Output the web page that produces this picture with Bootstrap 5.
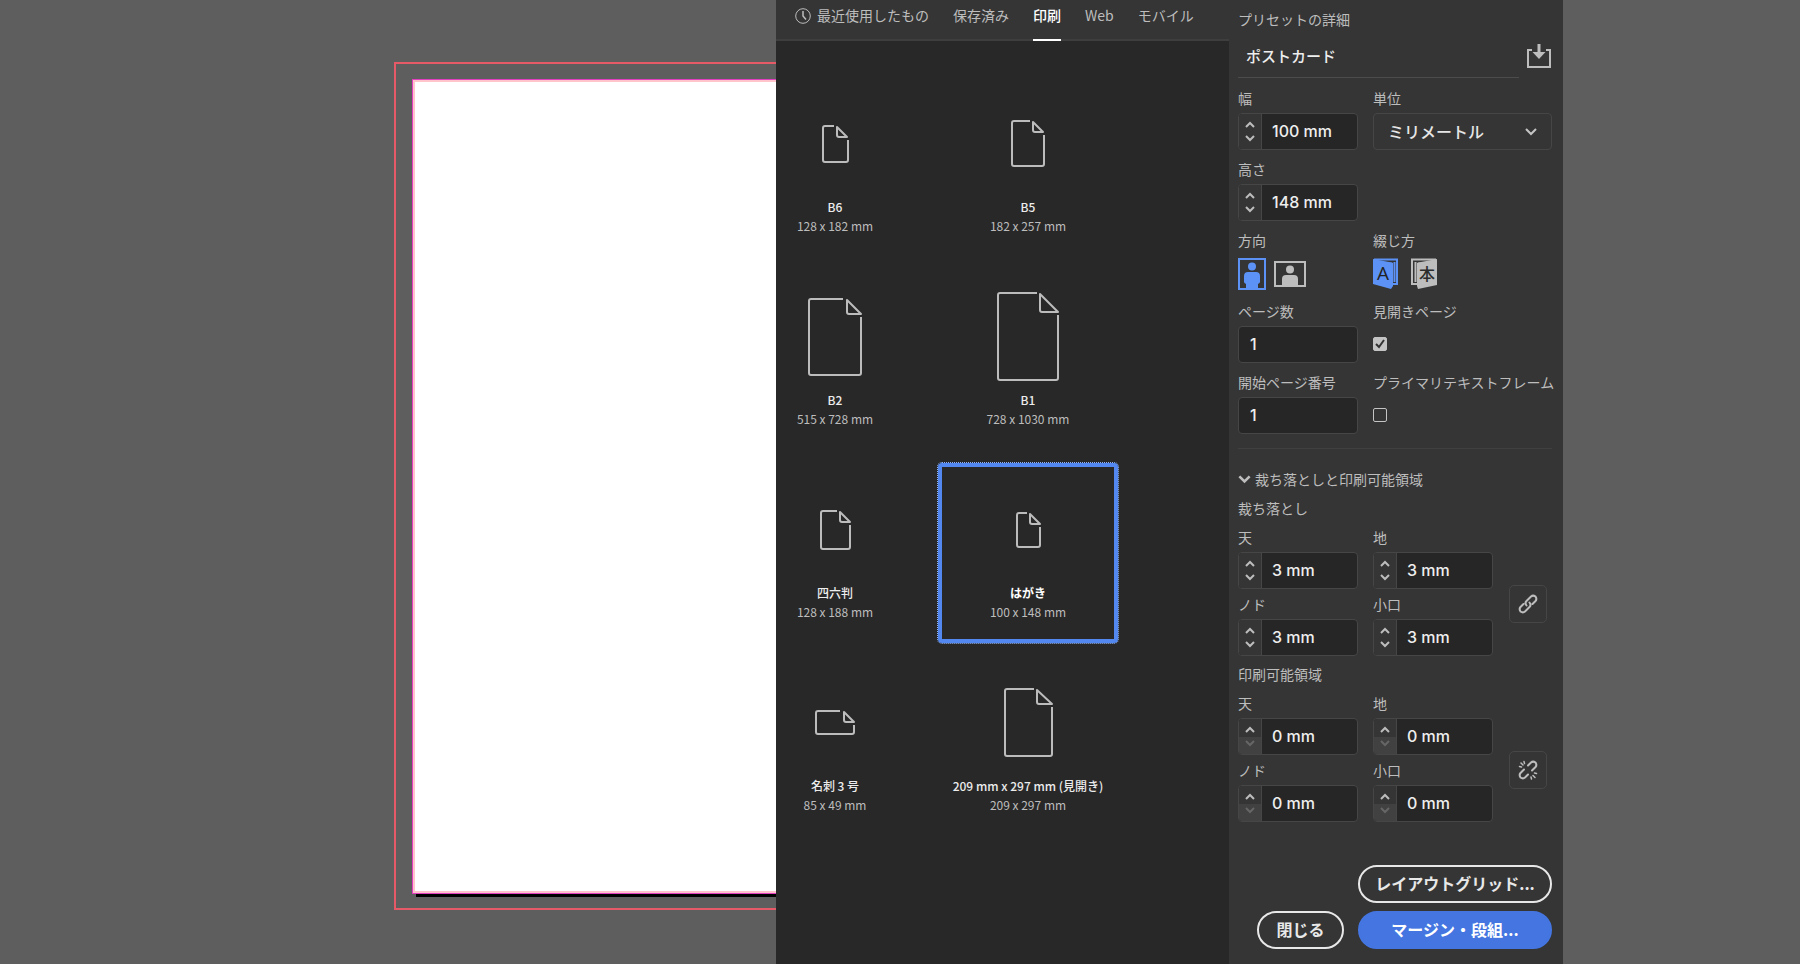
<!DOCTYPE html>
<html lang="ja">
<head>
<meta charset="utf-8">
<meta name="viewport" content="width=device-width, initial-scale=1">
<title>新規ドキュメント</title>
<link rel="stylesheet" href="https://cdn.jsdelivr.net/npm/bootstrap@5.3.0/dist/css/bootstrap.min.css">
<style>
  :root { --panel:#353535; --well:#282828; --line:#464646; --soft:#bdbdbd; --blue:#5288f0; }
  body { background:#5e5e5e; color:var(--soft); font:14px/21px "Noto Sans CJK JP", sans-serif; }
  button { color:inherit; }

  /* pasteboard with the page and its bleed frame */
  .pasteboard { flex:776 1 0; min-width:0; }
  .bleed { border:2px solid #e65a68; border-right:0; padding:15px 0 14px 16px; margin:62px 0 54px 394px; }
  .sheet { background:#fff; border:1px solid #e23cc0; border-right:0; box-shadow:inset 2px 2px #ffc4cc, inset 0 -2px #ffc4cc, 4px 3px #000; }
  .backdrop { flex:237 1 0; min-width:0; }

  /* preset browser */
  .browser { flex:0 0 453px; background:var(--well); overflow:hidden; position:relative; z-index:1; }
  .tabs { background:var(--panel); border-bottom:2px solid #3e3e3e; gap:24px; padding-left:19px; height:41px; }
  .tabs button { background:none; border:0; border-bottom:2px solid transparent; padding:4px 0 12px; margin-bottom:-2px; height:41px; gap:6px; white-space:nowrap; }
  .tabs button.active { color:#fff; border-color:#fff; font-weight:500; }
  .presets { grid-template-columns:118px 180px; gap:13px 44px; padding-top:36px; justify-content:start; }
  .preset { background:none; border:0; height:180px; padding:13px 0 0; font-size:12px; line-height:18px; white-space:nowrap; }
  .preset .art { height:107px; }
  .preset strong { color:#ececec; font-weight:500; line-height:20px; }
  .preset.chosen { border:4px solid var(--blue); border-radius:4px; outline:1px dotted #8fb4f8; padding-top:9px; }
  .preset.chosen strong { color:#fff; font-weight:700; }
  .preset svg { fill:none; stroke:#bcbcbc; stroke-width:2; stroke-linejoin:round; }

  /* details */
  .details { flex:0 0 334px; min-width:0; background:var(--panel); padding:9px 11px 15px 9px; }
  .title-input { background:none; border:0; border-bottom:1px solid #4c4c4c; color:#eee; font-size:15px; font-weight:500; height:44px; padding:0 8px; width:281px; }
  .plain-btn { background:none; border:0; padding:0; line-height:0; }
  .fields { grid-template-columns:120px minmax(0, 1fr); gap:9px 15px; margin-top:10px; }
  .field label, .field .caption { display:block; line-height:21px; margin-bottom:4px; white-space:nowrap; }
  .box { height:37px; border:1px solid var(--line); border-radius:4px; background:#262626; overflow:hidden; }
  .box input, input.box { color:#eee; font:500 16px Inter, sans-serif; }
  .box input { background:none; border:0; padding:0 0 1px 10px; min-width:0; flex:1; }
  input.box { width:120px; padding:0 11px 2px; }
  .icons { height:37px; }
  .spin { width:23px; background:var(--panel); border-right:1px solid var(--line); }
  .spin button { background:none; border:0; padding:0; flex:1; line-height:0; }
  .spin button:first-child { padding-top:3px; }
  .spin button:last-child { padding-bottom:3px; }
  .spin button:disabled { background:#414141; color:#666; }
  .spin svg, .chev { fill:none; stroke:currentColor; stroke-width:2; }
  select.box { appearance:none; width:100%; background:var(--panel) url("data:image/svg+xml,%3Csvg xmlns='http://www.w3.org/2000/svg' width='12' height='8'%3E%3Cpath d='M1 1l5 5 5-5' fill='none' stroke='%23c4c4c4' stroke-width='2'/%3E%3C/svg%3E") no-repeat right 14px center; color:#e6e6e6; font-size:16px; font-weight:500; padding:0 14px 1px; }
  .tick { appearance:none; display:block; width:14px; height:14px; margin:15px 0 0; border:1px solid #c4c4c4; border-radius:2px; }
  .tick:checked { background:#c4c4c4 url("data:image/svg+xml,%3Csvg xmlns='http://www.w3.org/2000/svg' width='12' height='12'%3E%3Cpath d='M2 6l3 3 5-7' fill='none' stroke='%23333' stroke-width='2'/%3E%3C/svg%3E") center no-repeat; }
  .rule { border-top:1px solid #404040; margin:14px 0 20px; }
  .slug-head { margin-top:8px; }
  .margins { grid-template-columns:120px 120px; gap:5px 15px; }
  .link-btn { width:38px; height:38px; background:none; border:1px solid var(--line); border-radius:5px; padding:0; line-height:0; margin-top:25px; }
  .pill { height:38px; border-radius:19px; border:2px solid #e8e8e8; background:none; color:#e8e8e8; font-size:16px; font-weight:700; line-height:20px; padding:0 0 3px; }
  .pill.wide { width:194px; }
  .pill.slim { width:87px; }
  .pill.main { background:#4475e0; border-color:#4475e0; color:#fff; }
  .actions { gap:14px; }
</style>
</head>
<body>
<svg class="d-none">
  <symbol id="up" viewBox="0 0 10 7"><path d="M1 6l4-4 4 4"/></symbol>
  <symbol id="down" viewBox="0 0 10 7"><path d="M1 1l4 4 4-4"/></symbol>
</svg>
<div class="d-flex min-vh-100">
  <main class="pasteboard d-flex">
    <div class="bleed flex-fill d-flex"><div class="sheet flex-fill"></div></div>
  </main>

  <section class="browser">
    <nav class="tabs d-flex">
      <button class="d-flex align-items-center"><svg width="16" height="16" viewBox="0 0 16 16" fill="none" stroke="currentColor"><circle cx="8" cy="8" r="7.3"/><path stroke-width="1.5" d="M8 3v5l3 3.5"/></svg>最近使用したもの</button>
      <button>保存済み</button>
      <button class="active">印刷</button>
      <button>Web</button>
      <button>モバイル</button>
    </nav>
    <div class="presets d-grid">
      <button class="preset d-flex flex-column align-items-center">
        <span class="art d-flex align-items-center"><svg width="27" height="38"><path d="M12 1H3Q1 1 1 3V35Q1 37 3 37H24Q26 37 26 35V15M15 2V10Q15 12 17 12H25Z"/></svg></span>
        <strong>B6</strong><span>128 x 182 mm</span></button>
      <button class="preset d-flex flex-column align-items-center">
        <span class="art d-flex align-items-center"><svg width="34" height="47"><path d="M19 1H3Q1 1 1 3V44Q1 46 3 46H31Q33 46 33 44V15M22 2V10Q22 12 24 12H32Z"/></svg></span>
        <strong>B5</strong><span>182 x 257 mm</span></button>
      <button class="preset d-flex flex-column align-items-center">
        <span class="art d-flex align-items-center"><svg width="54" height="78"><path d="M35 1H3Q1 1 1 3V75Q1 77 3 77H51Q53 77 53 75V19M39 2V14Q39 16 41 16H53Z"/></svg></span>
        <strong>B2</strong><span>515 x 728 mm</span></button>
      <button class="preset d-flex flex-column align-items-center">
        <span class="art d-flex align-items-center"><svg width="62" height="89"><path d="M40 1H3Q1 1 1 3V86Q1 88 3 88H59Q61 88 61 86V23M43 2V18Q43 20 45 20H61Z"/></svg></span>
        <strong>B1</strong><span>728 x 1030 mm</span></button>
      <button class="preset d-flex flex-column align-items-center">
        <span class="art d-flex align-items-center"><svg width="31" height="40"><path d="M17 1H3Q1 1 1 3V37Q1 39 3 39H28Q30 39 30 37V15M20 2V10Q20 12 22 12H30Z"/></svg></span>
        <strong>四六判</strong><span>128 x 188 mm</span></button>
      <button class="preset chosen d-flex flex-column align-items-center">
        <span class="art d-flex align-items-center"><svg width="25" height="36"><path d="M11 1H3Q1 1 1 3V33Q1 35 3 35H22Q24 35 24 33V15M14 2V10Q14 12 16 12H24Z"/></svg></span>
        <strong>はがき</strong><span>100 x 148 mm</span></button>
      <button class="preset d-flex flex-column align-items-center">
        <span class="art d-flex align-items-center"><svg width="40" height="25"><path d="M25 1H3Q1 1 1 3V22Q1 24 3 24H37Q39 24 39 22V15M29 2V10Q29 12 31 12H39Z"/></svg></span>
        <strong>名刺 3 号</strong><span>85 x 49 mm</span></button>
      <button class="preset d-flex flex-column align-items-center">
        <span class="art d-flex align-items-center"><svg width="49" height="69"><path d="M30 1H3Q1 1 1 3V66Q1 68 3 68H46Q48 68 48 66V19M33 2V14Q33 16 35 16H48Z"/></svg></span>
        <strong>209 mm x 297 mm (見開き)</strong><span>209 x 297 mm</span></button>
    </div>
  </section>

  <aside class="details d-flex flex-column">
    <div>プリセットの詳細</div>
    <div class="d-flex justify-content-between align-items-center mt-1">
      <input class="title-input" aria-label="名前" value="ポストカード">
      <button class="plain-btn" aria-label="プリセットを保存"><svg width="26" height="26" viewBox="0 0 26 26"><path d="M6 7H2V24H24V7H20" fill="none" stroke="#bdbdbd" stroke-width="2"/><path d="M11.500 1h3v8h5L13 16 6.500 9h5z" fill="#bdbdbd"/></svg></button>
    </div>

    <div class="fields d-grid">
      <div class="field"><label for="w">幅</label>
        <div class="box d-flex"><div class="spin d-flex flex-column"><button aria-label="増やす"><svg width="10" height="7"><use href="#up"/></svg></button><button aria-label="減らす"><svg width="10" height="7"><use href="#down"/></svg></button></div><input id="w" value="100 mm"></div></div>
      <div class="field"><label for="unit">単位</label><select id="unit" class="box"><option>ミリメートル</option></select></div>
      <div class="field"><label for="h">高さ</label>
        <div class="box d-flex"><div class="spin d-flex flex-column"><button aria-label="増やす"><svg width="10" height="7"><use href="#up"/></svg></button><button aria-label="減らす"><svg width="10" height="7"><use href="#down"/></svg></button></div><input id="h" value="148 mm"></div></div>
      <div></div>
      <div class="field"><div class="caption">方向</div>
        <div class="icons d-flex align-items-center gap-2">
          <button class="plain-btn" aria-label="縦置き"><svg width="28" height="32" viewBox="0 0 28 32" fill="#5c92f5"><path fill="none" stroke="#5c92f5" stroke-width="2" d="M1 1H27V31H1z"/><circle cx="14" cy="8.500" r="4"/><path d="M10 14h8q4 0 4 4v6q0 1-2 2v5H8v-5q-2-1-2-2v-6q0-4 4-4z"/></svg></button>
          <button class="plain-btn" aria-label="横置き"><svg width="32" height="26" viewBox="0 0 32 26" fill="#bdbdbd"><path fill="none" stroke="#bdbdbd" stroke-width="2" d="M1 1H31V25H1z"/><circle cx="16" cy="8.500" r="4"/><path d="M12 14h8q4 0 4 4v6H8v-6q0-4 4-4z"/></svg></button>
        </div></div>
      <div class="field"><div class="caption">綴じ方</div>
        <div class="icons d-flex align-items-center gap-2">
          <button class="plain-btn me-1" aria-label="左綴じ"><svg width="26" height="31" viewBox="0 0 26 31"><path fill="none" stroke="#5c92f5" stroke-width="2" d="M1 1.500H24V26H17M21.500 4V24"/><path fill="#5c92f5" d="M0 1L16 4Q19 4 20 5V28L18 31 0 26z"/><text x="10" y="22" font-family="Open Sans, sans-serif" font-size="19" text-anchor="middle" fill="#222">A</text></svg></button>
          <button class="plain-btn" aria-label="右綴じ"><svg width="26" height="31" viewBox="0 0 26 31"><path fill="none" stroke="#bdbdbd" stroke-width="2" d="M25 1.500H1V26H7M4.500 4V24"/><path fill="#bdbdbd" d="M26 1L10 4Q7 4 6 5V28L7 31 26 27z"/><text x="16" y="22" font-family="Noto Sans CJK JP, sans-serif" font-size="16" text-anchor="middle" fill="#2c2c2c" font-weight="500">本</text></svg></button>
        </div></div>
      <div class="field"><label for="pages">ページ数</label><input id="pages" class="box" value="1"></div>
      <div class="field"><label for="facing">見開きページ</label><input id="facing" class="tick" type="checkbox" checked></div>
      <div class="field"><label for="start">開始ページ番号</label><input id="start" class="box" value="1"></div>
      <div class="field"><label for="ptf">プライマリテキストフレーム</label><input id="ptf" class="tick" type="checkbox"></div>
    </div>

    <div class="rule"></div>
    <button class="plain-btn d-flex align-items-center lh-base"><svg class="chev me-1" width="13" height="9"><use href="#down"/></svg>裁ち落としと印刷可能領域</button>
    <div class="mt-2">裁ち落とし</div>
    <div class="d-flex align-items-center mt-2">
      <div class="margins d-grid me-3">
        <div class="field"><label for="b1">天</label><div class="box d-flex"><div class="spin d-flex flex-column"><button aria-label="増やす"><svg width="10" height="7"><use href="#up"/></svg></button><button aria-label="減らす"><svg width="10" height="7"><use href="#down"/></svg></button></div><input id="b1" value="3 mm"></div></div>
        <div class="field"><label for="b2">地</label><div class="box d-flex"><div class="spin d-flex flex-column"><button aria-label="増やす"><svg width="10" height="7"><use href="#up"/></svg></button><button aria-label="減らす"><svg width="10" height="7"><use href="#down"/></svg></button></div><input id="b2" value="3 mm"></div></div>
        <div class="field"><label for="b3">ノド</label><div class="box d-flex"><div class="spin d-flex flex-column"><button aria-label="増やす"><svg width="10" height="7"><use href="#up"/></svg></button><button aria-label="減らす"><svg width="10" height="7"><use href="#down"/></svg></button></div><input id="b3" value="3 mm"></div></div>
        <div class="field"><label for="b4">小口</label><div class="box d-flex"><div class="spin d-flex flex-column"><button aria-label="増やす"><svg width="10" height="7"><use href="#up"/></svg></button><button aria-label="減らす"><svg width="10" height="7"><use href="#down"/></svg></button></div><input id="b4" value="3 mm"></div></div>
      </div>
      <button class="link-btn" aria-label="すべての設定を同一にする"><svg width="20" height="20" viewBox="0 0 20 20" fill="none" stroke="currentColor" stroke-width="2" stroke-linecap="round"><path d="M8.500 11.500Q6.500 9 8.500 7L13 2.500Q15 .8 17.500 2.500 19.200 5 17.500 7L14.500 10M11.500 8.500Q13.500 11 11.500 13L7 17.500Q5 19.200 2.500 17.500 .8 15 2.500 13L5.500 10"/></svg></button>
    </div>
    <div class="slug-head">印刷可能領域</div>
    <div class="d-flex align-items-center mt-2">
      <div class="margins d-grid me-3">
        <div class="field"><label for="s1">天</label><div class="box d-flex"><div class="spin d-flex flex-column"><button aria-label="増やす"><svg width="10" height="7"><use href="#up"/></svg></button><button disabled aria-label="減らす"><svg width="10" height="7"><use href="#down"/></svg></button></div><input id="s1" value="0 mm"></div></div>
        <div class="field"><label for="s2">地</label><div class="box d-flex"><div class="spin d-flex flex-column"><button aria-label="増やす"><svg width="10" height="7"><use href="#up"/></svg></button><button disabled aria-label="減らす"><svg width="10" height="7"><use href="#down"/></svg></button></div><input id="s2" value="0 mm"></div></div>
        <div class="field"><label for="s3">ノド</label><div class="box d-flex"><div class="spin d-flex flex-column"><button aria-label="増やす"><svg width="10" height="7"><use href="#up"/></svg></button><button disabled aria-label="減らす"><svg width="10" height="7"><use href="#down"/></svg></button></div><input id="s3" value="0 mm"></div></div>
        <div class="field"><label for="s4">小口</label><div class="box d-flex"><div class="spin d-flex flex-column"><button aria-label="増やす"><svg width="10" height="7"><use href="#up"/></svg></button><button disabled aria-label="減らす"><svg width="10" height="7"><use href="#down"/></svg></button></div><input id="s4" value="0 mm"></div></div>
      </div>
      <button class="link-btn" aria-label="すべての設定を同一にする"><svg width="20" height="20" viewBox="0 0 20 20" fill="none" stroke="currentColor" stroke-width="2" stroke-linecap="round"><path d="M10 5.500L13 2.500Q15 .8 17.500 2.500 19.200 5 17.500 7L14 10.500M10 14.500L7 17.500Q5 19.200 2.500 17.500 .8 15 2.500 13L6 9.500"/><path stroke-width="1.500" d="M6 1.500l.5 2M3 3l2 2M1.500 6.500l2 .5M16.500 13l2 .5M15 15.500l2 2M13 17l.5 2"/></svg></button>
    </div>

    <div class="mt-auto d-flex flex-column align-items-end gap-2">
      <button class="pill wide">レイアウトグリッド...</button>
      <div class="actions d-flex"><button class="pill slim">閉じる</button><button class="pill wide main">マージン・段組...</button></div>
    </div>
  </aside>
  <div class="backdrop"></div>
</div>
<script src="https://cdn.jsdelivr.net/npm/bootstrap@5.3.0/dist/js/bootstrap.bundle.min.js"></script>
</body>
</html>
